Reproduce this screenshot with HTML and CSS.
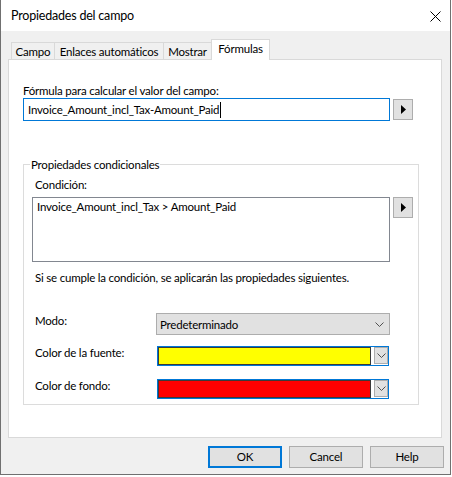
FILE: index.html
```html
<!DOCTYPE html>
<html>
<head>
<meta charset="utf-8">
<title>Propiedades del campo</title>
<link rel="stylesheet" href="styles.css">
</head>
<body>
<div class="win">
  <div class="titlebar">
    <span class="title">Propiedades del campo</span>
    <svg class="close" width="11" height="11" viewBox="0 0 11 11"><path d="M0.5 0.5 L10.5 10.5 M10.5 0.5 L0.5 10.5" stroke="#000" stroke-width="1" fill="none"/></svg>
  </div>
  <div class="body">
    <div class="tabs">
      <div class="tab t1">Campo</div>
      <div class="tab t2">Enlaces automáticos</div>
      <div class="tab t3">Mostrar</div>
      <div class="tab t4 sel">Fórmulas</div>
    </div>
    <div class="panel">
      <div class="lbl formula-lbl">Fórmula para calcular el valor del campo:</div>
      <div class="row">
        <div class="input">Invoice_Amount_incl_Tax-Amount_Paid<span class="caret"></span></div>
        <div class="btn-arrow first"><svg width="5" height="9" viewBox="0 0 5 9"><path d="M0 0 L5 4.5 L0 9 Z" fill="#000"/></svg></div>
      </div>
      <div class="group">
        <div class="group-title">Propiedades condicionales</div>
        <div class="lbl cond-lbl">Condición:</div>
        <div class="row">
          <div class="textarea">Invoice_Amount_incl_Tax &gt; Amount_Paid</div>
          <div class="btn-arrow"><svg width="5" height="9" viewBox="0 0 5 9"><path d="M0 0 L5 4.5 L0 9 Z" fill="#000"/></svg></div>
        </div>
        <div class="lbl note">Si se cumple la condición, se aplicarán las propiedades siguientes.</div>
        <div class="prop-row r-mode">
          <div class="plbl">Modo:</div>
          <div class="combo"><span>Predeterminado</span><svg width="9" height="5" viewBox="0 0 9 5"><path d="M0.5 0.5 L4.5 4.5 L8.5 0.5" stroke="#505050" stroke-width="1" fill="none"/></svg></div>
        </div>
        <div class="prop-row r-font">
          <div class="plbl">Color de la fuente:</div>
          <div class="color-combo">
            <div class="swatch yellow"></div>
            <div class="dd"><svg width="9" height="5" viewBox="0 0 9 5"><path d="M0.5 0.5 L4.5 4.5 L8.5 0.5" stroke="#505050" stroke-width="1" fill="none"/></svg></div>
          </div>
        </div>
        <div class="prop-row r-bg">
          <div class="plbl">Color de fondo:</div>
          <div class="color-combo">
            <div class="swatch red"></div>
            <div class="dd"><svg width="9" height="5" viewBox="0 0 9 5"><path d="M0.5 0.5 L4.5 4.5 L8.5 0.5" stroke="#505050" stroke-width="1" fill="none"/></svg></div>
          </div>
        </div>
      </div>
    </div>
    <div class="buttons">
      <div class="btn default">OK</div>
      <div class="btn">Cancel</div>
      <div class="btn">Help</div>
    </div>
  </div>
</div>
</body>
</html>
```

FILE: styles.css
```css
* { box-sizing: border-box; }
html, body { margin: 0; padding: 0; background: #fff; }
body {
  font-family: Lato, "Open Sans", sans-serif;
  font-size: 11.5px;
  letter-spacing: -0.2px;
  color: #000;
}
.win {
  width: 451px;
  height: 475px;
  border: 1px solid #707070;
  border-top: none;
  background: #f0f0f0;
  display: flex;
  flex-direction: column;
}
.titlebar {
  height: 31px;
  flex: none;
  background: #fff;
  display: flex;
  align-items: center;
  justify-content: space-between;
  padding: 1px 9px 0 10px;
}
.title { font-size: 12.5px; line-height: 20px; }
.close { display: block; }
.body { padding: 8px 0 0 7px; flex: 1; }
.tabs {
  display: flex;
  align-items: flex-end;
  height: 20px;
  padding-left: 3px;
}
.tab {
  height: 17px;
  border: 1px solid #d9d9d9;
  border-bottom: none;
  line-height: 15px;
  padding-top: 1px;
  text-align: center;
  white-space: nowrap;
  background: #f0f0f0;
  margin-left: -1px;
}
.t1 { width: 44px; margin-left: 0; }
.t2 { width: 110px; }
.t3 { width: 49px; }
.t4 { width: 59px; }
.tab.sel {
  height: 21px;
  background: #fff;
  margin-bottom: -1px;
  padding-top: 1px;
  position: relative;
  z-index: 2;
}
.panel {
  width: 434px;
  height: 379px;
  background: #fff;
  border: 1px solid #d9d9d9;
  padding: 0 0 0 14px;
}
.lbl { line-height: 15px; white-space: nowrap; }
.formula-lbl { margin-top: 23px; }
.row { display: flex; align-items: flex-start; }
.input {
  width: 367px;
  height: 23px;
  border: 1px solid #0078d7;
  padding-left: 4px;
  line-height: 21px;
  white-space: nowrap;
}
.caret {
  display: inline-block;
  width: 1px;
  height: 16px;
  background: #000;
  vertical-align: -4px;
  margin-left: 1px;
}
.btn-arrow {
  width: 20px;
  height: 21px;
  margin-left: 3px;
  background: #e1e1e1;
  border: 1px solid #adadad;
  display: flex;
  align-items: center;
  justify-content: center;
  padding-left: 1px;
}
.btn-arrow.first { margin-top: 1px; }
.btn-arrow svg { display: block; }
.group {
  margin-top: 43px;
  width: 396px;
  height: 241px;
  border: 1px solid #dcdcdc;
  padding: 0 0 0 11px;
}
.group-title {
  margin: -8px 0 0 -5px;
  background: #fff;
  padding: 0 1px;
  width: max-content;
  line-height: 15px;
}
.cond-lbl { margin-top: 5px; }
.group .row { margin-top: 5px; margin-left: -3px; }
.textarea {
  width: 358px;
  height: 65px;
  border: 1px solid #828790;
  padding: 1px 4px;
  line-height: 15px;
  white-space: nowrap;
}
.note { margin-top: 8px; }
.prop-row { display: flex; align-items: flex-start; }
.plbl { width: 121px; line-height: 15px; white-space: nowrap; flex: none; }
.r-mode { margin-top: 28px; }
.r-font { margin-top: 10px; }
.r-bg { margin-top: 12px; }
.combo {
  width: 234px;
  height: 22px;
  background: #e1e1e1;
  border: 1px solid #adadad;
  display: flex;
  align-items: center;
  justify-content: space-between;
  padding: 0 5px 0 3px;
  line-height: 15px;
}
.combo svg, .dd svg { display: block; }
.color-combo {
  width: 232px;
  height: 20px;
  border: 1px solid #0078d7;
  background: #fff;
  display: flex;
  margin: 1px 0 0 1px;
}
.swatch {
  width: 213px;
  height: 18px;
  border: 1px solid #3a3a3a;
}
.yellow { background: #ffff00; }
.red { background: #ff0000; }
.dd {
  width: 14px;
  height: 17px;
  margin-left: 3px;
  background: #e1e1e1;
  border: 1px solid #adadad;
  display: flex;
  align-items: center;
  justify-content: center;
}
.buttons {
  display: flex;
  justify-content: flex-end;
  gap: 7px;
  margin-top: 8px;
  padding-right: 6px;
}
.btn {
  width: 74px;
  height: 22px;
  background: #e1e1e1;
  border: 1px solid #adadad;
  text-align: center;
  line-height: 20px;
}
.btn.default {
  border: 2px solid #0078d7;
  line-height: 18px;
}
```
